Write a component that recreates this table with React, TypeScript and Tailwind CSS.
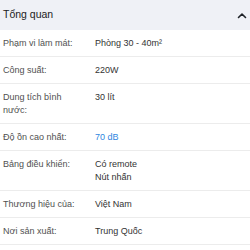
import React from 'react';

type Spec = { label: string; value: string[]; accent?: boolean };

const SPECS: Spec[] = [
  { label: 'Phạm vi làm mát:', value: ['Phòng 30 - 40m²'] },
  { label: 'Công suất:', value: ['220W'] },
  { label: 'Dung tích bình nước:', value: ['30 lít'] },
  { label: 'Độ ồn cao nhất:', value: ['70 dB'], accent: true },
  { label: 'Bảng điều khiển:', value: ['Có remote', 'Nút nhấn'] },
  { label: 'Thương hiệu của:', value: ['Việt Nam'] },
  { label: 'Nơi sản xuất:', value: ['Trung Quốc'] },
];

function SpecRow({ spec }: { spec: Spec }): React.ReactElement {
  return (
    <div className="grid grid-cols-[92px_1fr] border-b border-[#ececec] pt-[7px] pb-[6px] pl-[3px] text-[9px] leading-[13px]">
      <div className="pr-2 text-[#505050]">{spec.label}</div>
      <div className={spec.accent ? 'text-[#2f86e0]' : 'text-[#333]'}>
        {spec.value.map((line) => (
          <div key={line}>{line}</div>
        ))}
      </div>
    </div>
  );
}

export default function App(): React.ReactElement {
  return (
    <div className="h-[250px] w-[250px] overflow-hidden bg-white font-['Liberation_Sans',Arial,sans-serif]">
      <div className="flex h-[30px] items-center justify-between bg-[#eff1f6] pl-[3px] pr-[3px]">
        <span className="text-[10.5px] text-[#222]">Tổng quan</span>
        <svg width="10" height="7" viewBox="0 0 10 7" fill="none">
          <path d="M1.5 5.5 L5 2 L8.5 5.5" stroke="#1f2328" strokeWidth="1.6" strokeLinecap="round" strokeLinejoin="round" />
        </svg>
      </div>
      {SPECS.map((spec) => (
        <SpecRow key={spec.label} spec={spec} />
      ))}
    </div>
  );
}
